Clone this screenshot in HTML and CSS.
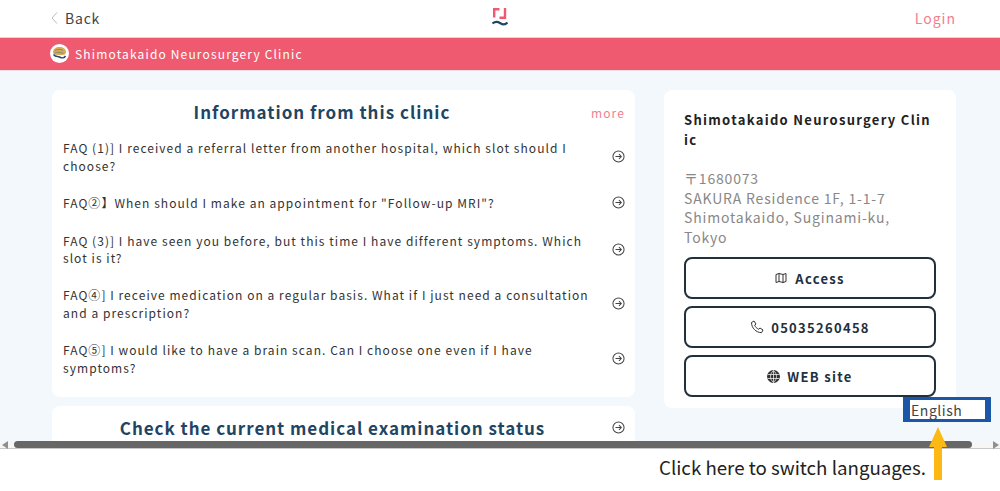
FILE: index.html
```html
<!DOCTYPE html>
<html lang="en">
<head>
<meta charset="utf-8">
<title>Shimotakaido Neurosurgery Clinic</title>
<link rel="stylesheet" href="styles.css">
</head>
<body>
<div class="frame">
  <div class="view">
    <header class="topbar">
      <a class="back"><svg class="chev" width="8" height="12" viewBox="0 0 8 12"><path d="M6 .5 1 6l5 5.500" fill="none" stroke="#bbb" stroke-width="1"/></svg>Back</a>
      <svg class="logo" width="16" height="20" viewBox="0 0 16 20"><path d="M7.500 1.200H2.200V9.500" fill="none" stroke="#ef5a70" stroke-width="2.400"/><path d="M13 0V9.800H7.500" fill="none" stroke="#ef5a70" stroke-width="2.400"/><path d="M.5 15.500C4 12.500 6.500 14 8 15S13 17.500 15.500 14.500" fill="none" stroke="#1f4564" stroke-width="2.200"/></svg>
      <a class="login">Login</a>
    </header>
    <div class="clinicbar">
      <svg class="avatar" width="19" height="19" viewBox="0 0 19 19"><circle cx="9.500" cy="9.500" r="9.500" fill="#fff"/><path d="M3 8c0-3 3-5 6.500-5S16 5 16 8s-3 3-6 3-7 0-7-3Z" fill="#d9a94f"/><path d="M5 6.500c2-1.500 6-1.500 8 0M4.500 9c3-1 6-1 9 .5" fill="none" stroke="#7a7f80" stroke-width=".8"/><path d="M3.500 10.500c2.500 3 4 1.500 6 2.500s4 2 6-1" fill="none" stroke="#2a4a6a" stroke-width="1.600"/></svg>
      <span>Shimotakaido Neurosurgery Clinic</span>
    </div>
    <main class="content">
      <div class="col-main">
        <section class="card info">
          <div class="info-head">
            <h2>Information from this clinic</h2>
            <a class="more">more</a>
          </div>
          <ul class="faq">
            <li><span>FAQ (1)] I received a referral letter from another hospital, which slot should I choose?</span><svg class="go" viewBox="0 0 14 14"><circle cx="7" cy="7" r="6" /><path d="M3.800 7h6.200M7.500 4.500 10 7l-2.500 2.500"/></svg></li>
            <li><span>FAQ②】When should I make an appointment for "Follow-up MRI"?</span><svg class="go" viewBox="0 0 14 14"><circle cx="7" cy="7" r="6" /><path d="M3.800 7h6.200M7.500 4.500 10 7l-2.500 2.500"/></svg></li>
            <li><span>FAQ (3)] I have seen you before, but this time I have different symptoms. Which slot is it?</span><svg class="go" viewBox="0 0 14 14"><circle cx="7" cy="7" r="6" /><path d="M3.800 7h6.200M7.500 4.500 10 7l-2.500 2.500"/></svg></li>
            <li><span>FAQ④] I receive medication on a regular basis. What if I just need a consultation and a prescription?</span><svg class="go" viewBox="0 0 14 14"><circle cx="7" cy="7" r="6" /><path d="M3.800 7h6.200M7.500 4.500 10 7l-2.500 2.500"/></svg></li>
            <li><span>FAQ⑤] I would like to have a brain scan. Can I choose one even if I have symptoms?</span><svg class="go" viewBox="0 0 14 14"><circle cx="7" cy="7" r="6" /><path d="M3.800 7h6.200M7.500 4.500 10 7l-2.500 2.500"/></svg></li>
          </ul>
        </section>
        <section class="card status">
          <h2>Check the current medical examination status</h2>
          <svg class="go status-go" viewBox="0 0 14 14"><circle cx="7" cy="7" r="6" /><path d="M3.800 7h6.200M7.500 4.500 10 7l-2.500 2.500"/></svg>
        </section>
      </div>
      <aside class="card side">
        <h3>Shimotakaido Neurosurgery Clinic</h3>
        <p class="addr">〒1680073<br>SAKURA Residence 1F, 1-1-7 Shimotakaido, Suginami-ku, Tokyo</p>
        <a class="btn"><svg class="ico ico-map" width="12" height="12" viewBox="0 0 12 12"><path d="M1 2.500 4 1.500 8 2.500 11 1.500V9.500L8 10.500 4 9.500 1 10.500ZM4 1.500V9.500M8 2.500V10.500" fill="none" stroke="#333" stroke-width="1"/></svg>Access</a>
        <a class="btn"><svg class="ico" width="14" height="14" viewBox="0 0 14 14"><path d="M1.500 2.500 4 1l2 3-1.300 1.200c.6 1.700 2 3.200 3.900 4L10 8l3 2-1.500 2.700C6 12.500 1.500 8 1.500 2.500Z" fill="none" stroke="#333" stroke-width="1"/></svg>05035260458</a>
        <a class="btn"><svg class="ico" width="13" height="13" viewBox="0 0 13 13"><circle cx="6.500" cy="6.500" r="6.500" fill="#333"/><path d="M.5 4.500h12M.5 8.500h12M6.500.5v12M6.500.5c-4 3.500-4 8.500 0 12M6.500.5c4 3.500 4 8.500 0 12" fill="none" stroke="#fff" stroke-width=".7"/></svg>WEB site</a>
      </aside>
    </main>
    <div class="lang">English</div>
  </div>
  <div class="scrollbar">
    <svg class="arr" width="8" height="8" viewBox="0 0 8 8"><path d="M7 0V8L1 4Z" fill="#8f8f8f"/></svg>
    <div class="thumb"></div>
    <svg class="arr" width="8" height="8" viewBox="0 0 8 8"><path d="M1 0V8L7 4Z" fill="#8f8f8f"/></svg>
  </div>
</div>
<div class="note">Click here to switch languages.</div>
<svg class="arrow" width="18" height="53" viewBox="0 0 18 53"><path d="M9 0 18 20H13V53H5V20H0Z" fill="#fdb913"/></svg>
</body>
</html>
```
FILE: styles.css
```css
* { box-sizing: border-box; }
html, body { margin: 0; height: 491px; overflow: hidden; background: #fff; }
body { position: relative; font-family: "Noto Sans CJK JP", "Noto Sans", sans-serif; color: #333; }
h2, h3, p, ul { margin: 0; padding: 0; }
.frame { height: 449px; display: flex; flex-direction: column; }
.view { position: relative; height: 441px; overflow: hidden; background: #f3f8fc; }
.topbar { height: 37px; background: #fff; display: flex; align-items: center; justify-content: space-between; padding: 0 44px 1px 51px; position: relative; }
.back { font-size: 14px; letter-spacing: .8px; display: flex; align-items: center; gap: 6px; color: #444; }
.logo { position: absolute; left: 492px; top: 8px; }
.login { font-size: 14px; letter-spacing: 1px; color: #f27e8e; }
.clinicbar { height: 34px; padding: 0 0 1px 50px; background: #ef5a70; border-top: 1px solid #f6c9d0; border-bottom: 1px solid #e3dfe3; display: flex; align-items: center; gap: 6px; color: #fff; font-size: 12px; letter-spacing: 1.15px; }
.content { display: flex; align-items: flex-start; gap: 29px; padding: 19px 0 0 52px; }
.col-main { width: 583px; display: flex; flex-direction: column; gap: 9px; }
.card { background: #fff; border-radius: 8px; }
.info { height: 307px; padding: 10px 10px 0 11px; }
.info-head { position: relative; height: 28px; text-align: center; }
h2 { font-size: 17px; line-height: 24px; font-weight: 700; letter-spacing: 1px; color: #1f4564; }
.info-head h2 { padding-right: 44px; }
.more { position: absolute; right: 0; top: 4px; font-size: 12px; letter-spacing: 1.1px; color: #f27e8e; }
.faq { list-style: none; margin-top: 11.400px; }
.faq li { display: flex; align-items: center; justify-content: space-between; font-size: 12px; line-height: 17.4px; letter-spacing: 1.05px; color: #333; margin-bottom: 20px; }
.faq li span { width: 530px; }
.go { width: 13px; height: 13px; flex: none; fill: none; stroke: #444; stroke-width: 1.1; }
.status { position: relative; height: 60px; padding: 10px 22px 0 0; text-align: center; }
.status h2 { letter-spacing: .96px; }
.status-go { position: absolute; right: 10px; top: 15px; }
.side { width: 292px; height: 318px; padding: 20px; }
h3 { font-size: 13px; line-height: 20px; font-weight: 700; letter-spacing: 1.3px; color: #222; word-break: break-all; }
.addr { margin: 19px 0 9.600px; font-size: 14px; line-height: 19.600px; letter-spacing: .82px; color: #888; }
.btn { height: 42px; margin-bottom: 7px; padding-top: 1px; border: 2px solid #22303e; border-radius: 8px; display: flex; align-items: center; justify-content: center; gap: 7px; font-size: 13px; font-weight: 700; letter-spacing: 1.3px; color: #22303e; }
.btn:last-child { margin-bottom: 0; }
.ico { flex: none; }
.ico-map { margin-right: 1px; }
.lang { position: absolute; left: 903px; top: 397px; width: 88px; height: 25px; border: solid #1b57a6; border-width: 3px 6px 3px 7px; background: #fff; font-size: 14px; line-height: 21px; letter-spacing: .55px; color: #444; padding-left: 1px; }
.scrollbar { height: 8px; display: flex; align-items: center; justify-content: space-between; background: #f6f6f6; border-bottom: 1px solid #c8c8c8; }
.thumb { width: 958px; height: 7px; margin-left: 5px; margin-right: auto; border-radius: 4px; background: #676767; }
.arr { flex: none; margin-left: 1px; }
.note { padding: 4px 0 0 659px; font-size: 18.700px; line-height: 27px; color: #222; white-space: nowrap; }
.arrow { position: absolute; left: 929px; top: 427px; }
```
